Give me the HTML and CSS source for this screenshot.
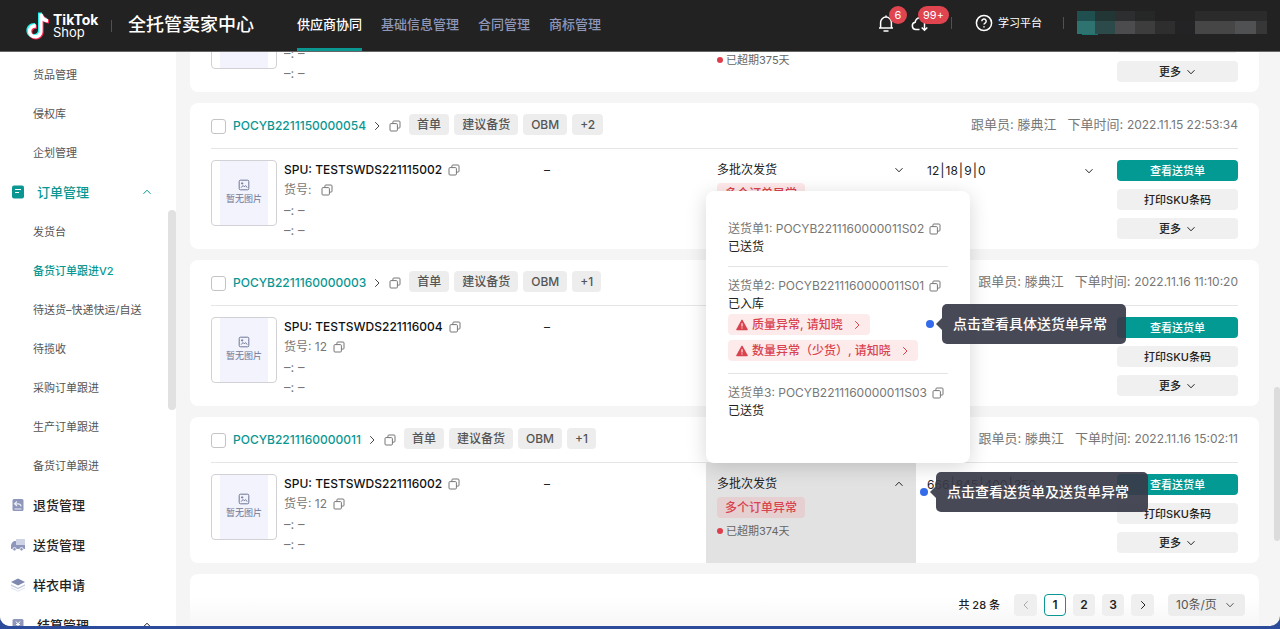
FILE: index.html
```html
<!DOCTYPE html>
<html lang="zh-CN">
<head>
<meta charset="utf-8">
<title>全托管卖家中心</title>
<link rel="stylesheet" href="styles.css">
</head>
<body>
<svg class="defs" aria-hidden="true">
  <symbol id="copy" viewBox="0 0 12 12"><rect x="1" y="3.6" width="7.4" height="7.4" rx="1"/><path d="M3.9 3.4V2a1 1 0 0 1 1-1H10a1 1 0 0 1 1 1v5.100a1 1 0 0 1-1 1H8.600"/></symbol>
  <symbol id="down" viewBox="0 0 10 10"><path d="M1.500 3.200 5 6.800 8.500 3.200"/></symbol>
  <symbol id="up" viewBox="0 0 10 10"><path d="M1.500 6.800 5 3.200 8.500 6.800"/></symbol>
  <symbol id="right" viewBox="0 0 10 10"><path d="M3.200 1.200 7 5 3.200 8.800"/></symbol>
  <symbol id="left" viewBox="0 0 10 10"><path d="M6.800 1.200 3 5 6.800 8.800"/></symbol>
  <symbol id="warn" viewBox="0 0 12 12"><path class="warn-body" d="M6 .6a.7.7 0 0 1 .6.350L11.700 10.200a.7.7 0 0 1-.6 1H.9a.7.7 0 0 1-.6-1L5.400.95A.7.7 0 0 1 6 .6z"/><path class="warn-mark" d="M6 4.200v3.200M6 8.400v1.200"/></symbol>
  <symbol id="picture" viewBox="0 0 12 12"><rect x="1.200" y="1.200" width="9.600" height="9.600" rx="1.200"/><path d="M3.200 8.600 5 6.500l1.300 1.300L7.500 6.600l1.700 2M3.600 3.900h1.200v1H3.600z"/></symbol>
</svg>
<div class="app">
  <header class="topbar">
    <a class="brand" href="#">
      <svg class="note" viewBox="0 0 24 28">
        <path class="cyan" d="M12 0.500h3.800c.4 3 2.300 5 5.200 5.400v3.900c-2 0-3.700-.5-5.200-1.500v9.800c0 4.500-3.300 8-7.700 8S.4 22.700.4 18.500s3.500-7.800 8.600-7.500v4.100c-2.600-.4-4.500 1-4.500 3.300s1.600 3.600 3.500 3.600c2.300 0 4-1.600 4-4z"/>
        <path class="pink" d="M14 2.500h3.600c.6 2.700 2.700 4.600 5.500 5v3.900c-2 0-3.900-.6-5.400-1.600v9.800c0 4.500-3.400 8-7.800 8-4.300 0-7.600-3.200-7.600-7.500s3.600-7.600 8.400-7.400v4.200c-2.500-.4-4.300 1-4.300 3.200s1.600 3.600 3.500 3.600c2.400 0 4.100-1.600 4.100-4z"/>
        <path class="white" d="M13.200 1.800h3.300c.5 2.800 2.600 4.900 5.500 5.300v3.300c-2 0-3.900-.6-5.400-1.700v10.200c0 4.300-3.200 7.600-7.300 7.600s-7.400-3-7.400-7.200 3.500-7.500 7.900-7.200v3.700c-2.600-.4-4.500 1-4.500 3.400s1.800 3.800 3.700 3.800c2.400 0 4.200-1.600 4.200-4.200z"/>
      </svg>
      <span class="brand-text"><b>TikTok</b><span>Shop</span></span>
    </a>
    <i class="bar"></i>
    <h1 class="title">全托管卖家中心</h1>
    <nav class="topnav">
      <a class="on" href="#">供应商协同</a>
      <a href="#">基础信息管理</a>
      <a href="#">合同管理</a>
      <a href="#">商标管理</a>
    </nav>
    <div class="tools">
      <button class="tool" type="button" aria-label="通知">
        <svg viewBox="0 0 18 18"><path d="M2 14h14M3.600 14V8.500a5.400 5.400 0 0 1 10.800 0V14M9 3V1.400M6.500 17h5"/></svg>
        <span class="badge">6</span>
      </button>
      <button class="tool" type="button" aria-label="下载">
        <svg viewBox="0 0 18 18"><path d="M8.500 15.500H4.800a3.700 3.700 0 0 1-.6-7.300A5.200 5.200 0 0 1 14 6.500M13.500 8v8.300M10.700 13.500l2.800 2.800 2.800-2.800"/></svg>
        <span class="badge wide">99+</span>
      </button>
      <i class="bar"></i>
      <a class="learn" href="#">
        <svg viewBox="0 0 18 18"><circle cx="9" cy="9" r="7.600"/><path d="M6.800 7.200a2.200 2.200 0 1 1 3.300 1.900c-.8.500-1.100.8-1.100 1.500M9 12.200v1.300"/></svg>
        <span>学习平台</span>
      </a>
      <i class="bar"></i>
      <svg class="account" viewBox="0 0 190 24">
        <rect width="18" height="10" fill="#1f4f4e"/><rect x="18" width="20" height="10" fill="#223635"/><rect x="38" width="20" height="10" fill="#2d2e2f"/><rect x="58" width="20" height="10" fill="#262727"/>
        <rect x="118" width="72" height="10" fill="#2b2b2b"/>
        <rect y="10" width="18" height="13" fill="#2f7370"/><rect x="18" y="10" width="20" height="13" fill="#2d4a4a"/><rect x="38" y="10" width="20" height="13" fill="#4c4c4e"/><rect x="58" y="10" width="20" height="13" fill="#3d3d3d"/><rect x="78" y="10" width="20" height="13" fill="#2e2e2e"/><rect x="98" y="10" width="20" height="13" fill="#232325"/><rect x="118" y="10" width="40" height="13" fill="#464647"/><rect x="158" y="10" width="21" height="13" fill="#505153"/><rect x="179" y="10" width="11" height="13" fill="#373737"/>
        <rect x="5" y="23" width="16" height="1" fill="#1a7571"/>
      </svg>
    </div>
  </header>

  <div class="content">
    <aside class="sidebar">
      <nav class="menu">
        <a class="sub" href="#">货品管理</a>
        <a class="sub" href="#">侵权库</a>
        <a class="sub" href="#">企划管理</a>
        <a class="group wide on" href="#"><svg class="mi" viewBox="0 0 14 14"><rect x="1" y=".5" width="12" height="13" rx="2" fill="#0a9792"/><path d="M4 4.500h6M4 7.500h4" stroke="#fff" stroke-width="1.200"/></svg><span>订单管理</span><svg class="ic fold"><use href="#up"/></svg></a>
        <a class="sub" href="#">发货台</a>
        <a class="sub on" href="#">备货订单跟进V2</a>
        <a class="sub" href="#">待送货–快递快运/自送</a>
        <a class="sub" href="#">待揽收</a>
        <a class="sub" href="#">采购订单跟进</a>
        <a class="sub" href="#">生产订单跟进</a>
        <a class="sub" href="#">备货订单跟进</a>
        <a class="group" href="#"><svg class="mi" viewBox="0 0 14 14"><rect x="1.500" y="1" width="11" height="12" rx="1.500" fill="#8e97bb"/><path d="M6 3.500 3.500 5.800 6 8M3.800 5.800h3.400c1.600 0 2.700 1 2.900 2.600M3.500 11h7" fill="none" stroke="#e9ecf6" stroke-width="1.200"/></svg><span>退货管理</span></a>
        <a class="group" href="#"><svg class="mi" viewBox="0 0 14 14"><path d="M5 1h8.500a.5.5 0 0 1 .5.500V7H5z" fill="#ced3e6"/><path d="M5 3H3.200C1.500 3.500.3 5.500 0 7.500V11h14V7H5z" fill="#8e97bb"/><circle cx="3.500" cy="11.200" r="1.700" fill="#8e97bb" stroke="#fff" stroke-width=".8"/><circle cx="10.500" cy="11.200" r="1.700" fill="#8e97bb" stroke="#fff" stroke-width=".8"/></svg><span>送货管理</span></a>
        <a class="group" href="#"><svg class="mi" viewBox="0 0 14 14"><path d="M7 .5 14 4 7 7.500 0 4z" fill="#7f89b0"/><path d="M0 6.300 7 9.800l7-3.500v1.500L7 11.300 0 7.800z" fill="#c5cbe0"/><path d="M0 9.300 7 12.800l7-3.500v1L7 13.800 0 10.300z" fill="#dde1ef"/></svg><span>样衣申请</span></a>
        <a class="group wide" href="#"><svg class="mi" viewBox="0 0 14 14"><rect x="1.500" y="1" width="11" height="12" rx="1.500" fill="#8e97bb"/><path d="M5 3.500 7 6l2-2.500M7 6v4.500M5 6.500h4M5 8.500h4" fill="none" stroke="#fff"/></svg><span>结算管理</span><svg class="ic fold"><use href="#up"/></svg></a>
      </nav>
      <span class="side-thumb"></span>
    </aside>

    <main class="orders">
      <article class="card">
        <div class="card-head"></div>
        <div class="card-body">
          <div class="thumb"><div class="noimg"><svg class="ic"><use href="#picture"/></svg>暂无图片</div></div>
          <div class="info"><p></p><p></p><p class="dim">–: –</p><p class="dim">–: –</p></div>
          <div class="dash"></div>
          <div class="status"><div class="line">多批次发货<svg class="ic"><use href="#down"/></svg></div><span class="alert">多个订单异常</span><p class="late">已超期375天</p></div>
          <div class="qty"></div>
          <div class="acts"><button class="btn main" type="button">查看送货单</button><button class="btn" type="button">打印SKU条码</button><button class="btn" type="button">更多<svg class="ic"><use href="#down"/></svg></button></div>
        </div>
      </article>

      <article class="card">
        <div class="card-head">
          <input type="checkbox" aria-label="选择订单 POCYB2211150000054"><a class="po" href="#">POCYB2211150000054</a><svg class="ic arrow"><use href="#right"/></svg><svg class="ic copy"><use href="#copy"/></svg>
          <div class="tags"><span>首单</span><span>建议备货</span><span>OBM</span><span>+2</span></div>
          <div class="meta"><span>跟单员: 滕典江</span><span>下单时间: <time>2022.11.15 22:53:34</time></span></div>
        </div>
        <div class="card-body">
          <div class="thumb"><div class="noimg"><svg class="ic"><use href="#picture"/></svg>暂无图片</div></div>
          <div class="info"><p class="spu">SPU: TESTSWDS221115002<svg class="ic copy"><use href="#copy"/></svg></p><p>货号:&nbsp;<svg class="ic copy"><use href="#copy"/></svg></p><p class="dim">–: –</p><p class="dim">–: –</p></div>
          <div class="dash">–</div>
          <div class="status"><div class="line">多批次发货<svg class="ic"><use href="#down"/></svg></div><span class="alert">多个订单异常</span></div>
          <div class="qty"><div class="line"><span>12<i>|</i>18<i>|</i>9<i>|</i>0</span><svg class="ic"><use href="#down"/></svg></div></div>
          <div class="acts"><button class="btn main" type="button">查看送货单</button><button class="btn" type="button">打印SKU条码</button><button class="btn" type="button">更多<svg class="ic"><use href="#down"/></svg></button></div>
        </div>
      </article>

      <article class="card">
        <div class="card-head">
          <input type="checkbox" aria-label="选择订单 POCYB2211160000003"><a class="po" href="#">POCYB2211160000003</a><svg class="ic arrow"><use href="#right"/></svg><svg class="ic copy"><use href="#copy"/></svg>
          <div class="tags"><span>首单</span><span>建议备货</span><span>OBM</span><span>+1</span></div>
          <div class="meta"><span>跟单员: 滕典江</span><span>下单时间: <time>2022.11.16 11:10:20</time></span></div>
        </div>
        <div class="card-body">
          <div class="thumb"><div class="noimg"><svg class="ic"><use href="#picture"/></svg>暂无图片</div></div>
          <div class="info"><p class="spu">SPU: TESTSWDS221116004<svg class="ic copy"><use href="#copy"/></svg></p><p>货号: 12<svg class="ic copy"><use href="#copy"/></svg></p><p class="dim">–: –</p><p class="dim">–: –</p></div>
          <div class="dash">–</div>
          <div class="status"></div>
          <div class="qty"></div>
          <div class="acts"><button class="btn main" type="button">查看送货单</button><button class="btn" type="button">打印SKU条码</button><button class="btn" type="button">更多<svg class="ic"><use href="#down"/></svg></button></div>
        </div>
      </article>

      <article class="card">
        <div class="card-head">
          <input type="checkbox" aria-label="选择订单 POCYB2211160000011"><a class="po" href="#">POCYB2211160000011</a><svg class="ic arrow"><use href="#right"/></svg><svg class="ic copy"><use href="#copy"/></svg>
          <div class="tags"><span>首单</span><span>建议备货</span><span>OBM</span><span>+1</span></div>
          <div class="meta"><span>跟单员: 滕典江</span><span>下单时间: <time>2022.11.16 15:02:11</time></span></div>
        </div>
        <div class="card-body">
          <div class="thumb"><div class="noimg"><svg class="ic"><use href="#picture"/></svg>暂无图片</div></div>
          <div class="info"><p class="spu">SPU: TESTSWDS221116002<svg class="ic copy"><use href="#copy"/></svg></p><p>货号: 12<svg class="ic copy"><use href="#copy"/></svg></p><p class="dim">–: –</p><p class="dim">–: –</p></div>
          <div class="dash">–</div>
          <div class="status open">
            <div class="line">多批次发货<svg class="ic"><use href="#up"/></svg></div><span class="alert">多个订单异常</span><p class="late">已超期374天</p>
            <div class="popup">
              <section><p class="no">送货单1: POCYB2211160000011S02<svg class="ic copy"><use href="#copy"/></svg></p><p>已送货</p></section>
              <section><p class="no">送货单2: POCYB2211160000011S01<svg class="ic copy"><use href="#copy"/></svg></p><p>已入库</p>
                <div class="issues">
                  <button class="issue" type="button"><svg class="ic warn"><use href="#warn"/></svg><span>质量异常, 请知晓</span><svg class="ic"><use href="#right"/></svg></button>
                  <button class="issue" type="button"><svg class="ic warn"><use href="#warn"/></svg><span>数量异常（少货）, 请知晓</span><svg class="ic"><use href="#right"/></svg></button>
                </div>
              </section>
              <section><p class="no">送货单3: POCYB2211160000011S03<svg class="ic copy"><use href="#copy"/></svg></p><p>已送货</p></section>
              <div class="hint in-popup"><span>点击查看具体送货单异常</span></div>
            </div>
            <div class="hint in-cell"><span>点击查看送货单及送货单异常</span></div>
          </div>
          <div class="qty"><div class="line"><span>666<i>|</i>845<i>|</i>400<i>|</i>350</span><svg class="ic"><use href="#down"/></svg></div></div>
          <div class="acts"><button class="btn main" type="button">查看送货单</button><button class="btn" type="button">打印SKU条码</button><button class="btn" type="button">更多<svg class="ic"><use href="#down"/></svg></button></div>
        </div>
      </article>

      <div class="card pager">
        <span class="total">共 28 条</span>
        <button type="button" class="step off" aria-label="上一页"><svg class="ic"><use href="#left"/></svg></button>
        <button type="button" class="on">1</button>
        <button type="button">2</button>
        <button type="button">3</button>
        <button type="button" class="step" aria-label="下一页"><svg class="ic"><use href="#right"/></svg></button>
        <label class="size"><select aria-label="每页条数"><option>10条/页</option></select><svg class="ic"><use href="#down"/></svg></label>
      </div>
    </main>
    <span class="page-thumb"></span>
  </div>
</div>
</body>
</html>
```
FILE: styles.css
```css
* { box-sizing: border-box; }
body {
  margin: 0;
  background: #2c4b9b;
  font: 12px/20px Inter, "Noto Sans CJK SC", sans-serif;
  color: #222;
}
p, h1 { margin: 0; }
a { color: inherit; text-decoration: none; }
i { font-style: normal; }
button { font: inherit; color: inherit; border: 0; padding: 0; background: none; cursor: pointer; }
.defs { position: absolute; width: 0; height: 0; }
.ic { width: 10px; height: 10px; flex: none; fill: none; stroke: currentColor; stroke-width: 1; }
.ic.copy { width: 12px; height: 12px; stroke: #777; }

.app {
  display: flex;
  flex-direction: column;
  height: calc(100vh - 3px);
  overflow: hidden;
  background: #f5f5f5;
  border-radius: 0 0 10px 10px;
}

/* top bar */
.topbar {
  display: flex;
  align-items: stretch;
  flex: none;
  height: 52px;
  padding: 0 13px 0 26px;
  background: #222;
  border-bottom: 1px solid #666;
  color: #fff;
}
.brand { display: flex; align-items: center; gap: 3px; width: 85px; }
.note { width: 24px; height: 28px; flex: none; }
.cyan { fill: #25f4ee; }
.pink { fill: #fe2c55; }
.white { fill: #fff; }
.brand-text { display: flex; flex-direction: column; font-size: 13px; line-height: 13px; }
.brand-text b { font-size: 14px; }
.bar { align-self: center; width: 1px; height: 12px; background: #4b5066; }
.title { margin-left: 16px; font-size: 18px; font-weight: 500; line-height: 49px; }
.topnav { display: flex; gap: 19px; margin-left: 43px; font-weight: 500; font-size: 13px; line-height: 49px; color: #8f97b8; }
.topnav .on { color: #fff; border-bottom: 3px solid #0a9792; }
.tools { display: flex; align-items: center; margin-left: auto; padding-bottom: 5px; }
.tool { position: relative; width: 18px; height: 18px; margin-right: 16px; }
.tool svg, .learn svg { display: block; width: 18px; height: 18px; fill: none; stroke: #fff; stroke-width: 1.5; }
.badge {
  position: absolute;
  left: 12px;
  top: -8px;
  min-width: 18px;
  padding: 0 5px;
  border-radius: 9px;
  background: #e0444f;
  font-size: 11px;
  line-height: 18px;
}
.badge.wide { left: 7px; }
.tools .bar { margin-left: 6px; }
.learn { display: flex; align-items: center; gap: 5px; margin: 0 15px 0 23px; font-size: 11px; }
.account { width: 190px; height: 24px; margin-left: 13px; }

.content { position: relative; display: flex; flex: 1; min-height: 0; }

/* side menu */
.sidebar { position: relative; width: 176px; flex: none; background: #fff; overflow: hidden; }
.menu { padding-top: 3px; }
.menu a { display: flex; align-items: center; }
.sub { height: 39px; padding-left: 33px; font-size: 11px; color: #555; }
.menu .on { color: #0a9792; font-weight: 500; }
.group { height: 40px; padding: 0 24px 0 11px; gap: 8px; font-size: 13px; font-weight: 500; }
.group.wide { gap: 12px; }
.mi { width: 14px; height: 14px; flex: none; }
.fold { margin-left: auto; }
.side-thumb { position: absolute; right: 0; top: 158px; width: 8px; height: 200px; border-radius: 4px; background: #e1e1e1; }
.page-thumb { position: absolute; right: 0; top: 335px; width: 6px; height: 154px; border-radius: 3px; background: #dcdcdc; }

/* order list, scrolled to its end */
.orders {
  display: flex;
  flex-direction: column;
  justify-content: flex-end;
  gap: 11px;
  flex: 1;
  min-width: 0;
  padding: 0 21px 0 14px;
  overflow: hidden;
}
.card { flex: none; padding: 0 21px; border-radius: 8px; background: #fff; }
.card-head { display: flex; align-items: center; height: 46px; padding-top: 1px; border-bottom: 1px solid #e6e6e6; }
.card-head input {
  appearance: none;
  width: 15px;
  height: 15px;
  margin: 0 7px 0 0;
  border: 1px solid #c4c4c4;
  border-radius: 3px;
  background: #fff;
}
.po { color: #0a9792; font-weight: 500; }
.arrow { margin: 0 7px 0 6px; color: #444; }
.tags { display: flex; gap: 5px; margin-left: 8px; padding-bottom: 4px; color: #555; font-weight: 500; }
.tags span { padding: 0 8px; line-height: 21px; border-radius: 4px; background: #ededed; }
.meta { display: flex; gap: 11px; margin-left: auto; padding-bottom: 4px; font-size: 13px; color: #777; }
.meta time { font-size: 12px; }

.card-body { display: grid; grid-template-columns: 73px 260fr 162fr 210fr 190fr 132px; height: 100px; }
.card-body > div { padding-top: 11px; }
.noimg {
  display: flex;
  flex-direction: column;
  align-items: center;
  justify-content: center;
  width: 66px;
  height: 66px;
  border: 1px solid #d2d2d6;
  border-radius: 4px;
  background: linear-gradient(90deg, #fff 8px, #f2f3fd 8px, #f2f3fd 56px, #fff 56px);
  font-size: 9px;
  line-height: 16px;
  color: #6d7596;
}
.noimg .ic { width: 12px; height: 12px; }
.info p { display: flex; align-items: center; gap: 6px; height: 20px; color: #777; }
.info .spu { color: #111; font-weight: 500; }
.info .dim { font-size: 13px; }
.status { position: relative; }
.card-body > .status, .card-body > .qty { padding-left: 11px; padding-right: 12px; }
.status.open { background: #e2e2e2; }
.line { display: flex; justify-content: space-between; align-items: center; }
.line i { padding: 0 1px; font-size: 13px; }
.alert {
  display: inline-block;
  margin: 3px 0;
  padding: 0 8px;
  line-height: 21px;
  border-radius: 4px;
  background: rgba(255, 77, 79, .12);
  color: #d9434e;
  font-weight: 500;
}
.late { display: flex; align-items: center; gap: 3px; font-size: 11px; color: #666; }
.late::before { content: ""; width: 6px; height: 6px; border-radius: 50%; background: #dc3f4b; }
.acts { display: flex; flex-direction: column; gap: 8px; padding-left: 11px; }
.btn {
  display: flex;
  align-items: center;
  justify-content: center;
  gap: 5px;
  height: 21px;
  border-radius: 4px;
  background: #f0f0f0;
  font-size: 11px;
  font-weight: 500;
}
.btn.main { background: #049a94; color: #fff; }

/* delivery popup */
.popup {
  position: absolute;
  left: 0;
  bottom: 100%;
  z-index: 10;
  width: 264px;
  padding: 19px 22px 33px;
  border-radius: 8px;
  background: #fff;
  box-shadow: 0 4px 20px rgba(0, 0, 0, .16);
}
.popup section { padding: 10px 0; line-height: 18px; }
.popup section + section { border-top: 1px solid #e4e4e4; }
.popup .no { display: flex; align-items: center; gap: 5px; color: #777; }
.issues { display: flex; flex-direction: column; align-items: flex-start; gap: 5px; padding: 1px 0 2px; }
.issue {
  display: flex;
  align-items: center;
  gap: 4px;
  height: 21px;
  padding: 0 8px;
  border-radius: 4px;
  background: #fdebec;
  color: #d9434e;
  font-weight: 500;
}
.issue span { padding-right: 5px; }
.ic.warn { width: 12px; height: 12px; }
.warn-body { fill: #d9434e; stroke: none; }
.warn-mark { stroke: #fdebec; stroke-width: 1.2; }

/* guide hints */
.hint { position: absolute; z-index: 11; display: flex; align-items: center; white-space: nowrap; }
.hint::before { content: ""; width: 8px; height: 8px; border-radius: 50%; background: #336bea; }
.hint::after { content: ""; order: 1; margin-left: 2px; border: 6px solid transparent; border-left: 0; border-right-color: #484a56; }
.hint span { order: 2; padding: 0 19px 0 11px; line-height: 40px; border-radius: 5px; background: rgba(56, 58, 72, .92); color: #fff; font-size: 14px; font-weight: 500; }
.in-popup { left: 220px; top: 113px; }
.in-cell { left: 214px; top: 9px; }

/* pager */
.pager { display: flex; align-items: center; justify-content: flex-end; gap: 7px; height: 52px; padding: 10px 14px 0; border-radius: 8px 8px 0 0; background: linear-gradient(#fff 24px, #f6f6f6); }
.total { margin-right: 7px; font-size: 11px; font-weight: 500; }
.pager button { display: flex; align-items: center; justify-content: center; width: 22px; height: 22px; border-radius: 4px; background: #efefef; font-weight: 600; }
.pager .step { width: 23px; }
.pager .off { color: #aaa; }
.pager .on { background: #fff; border: 1px solid #0a9792; }
.size { position: relative; margin-left: 7px; color: #555; }
.size select { display: block; appearance: none; width: 77px; height: 22px; padding: 0 8px; border: 0; border-radius: 4px; background: #ededed; color: inherit; font: inherit; }
.size .ic { position: absolute; right: 10px; top: 6px; }
```
